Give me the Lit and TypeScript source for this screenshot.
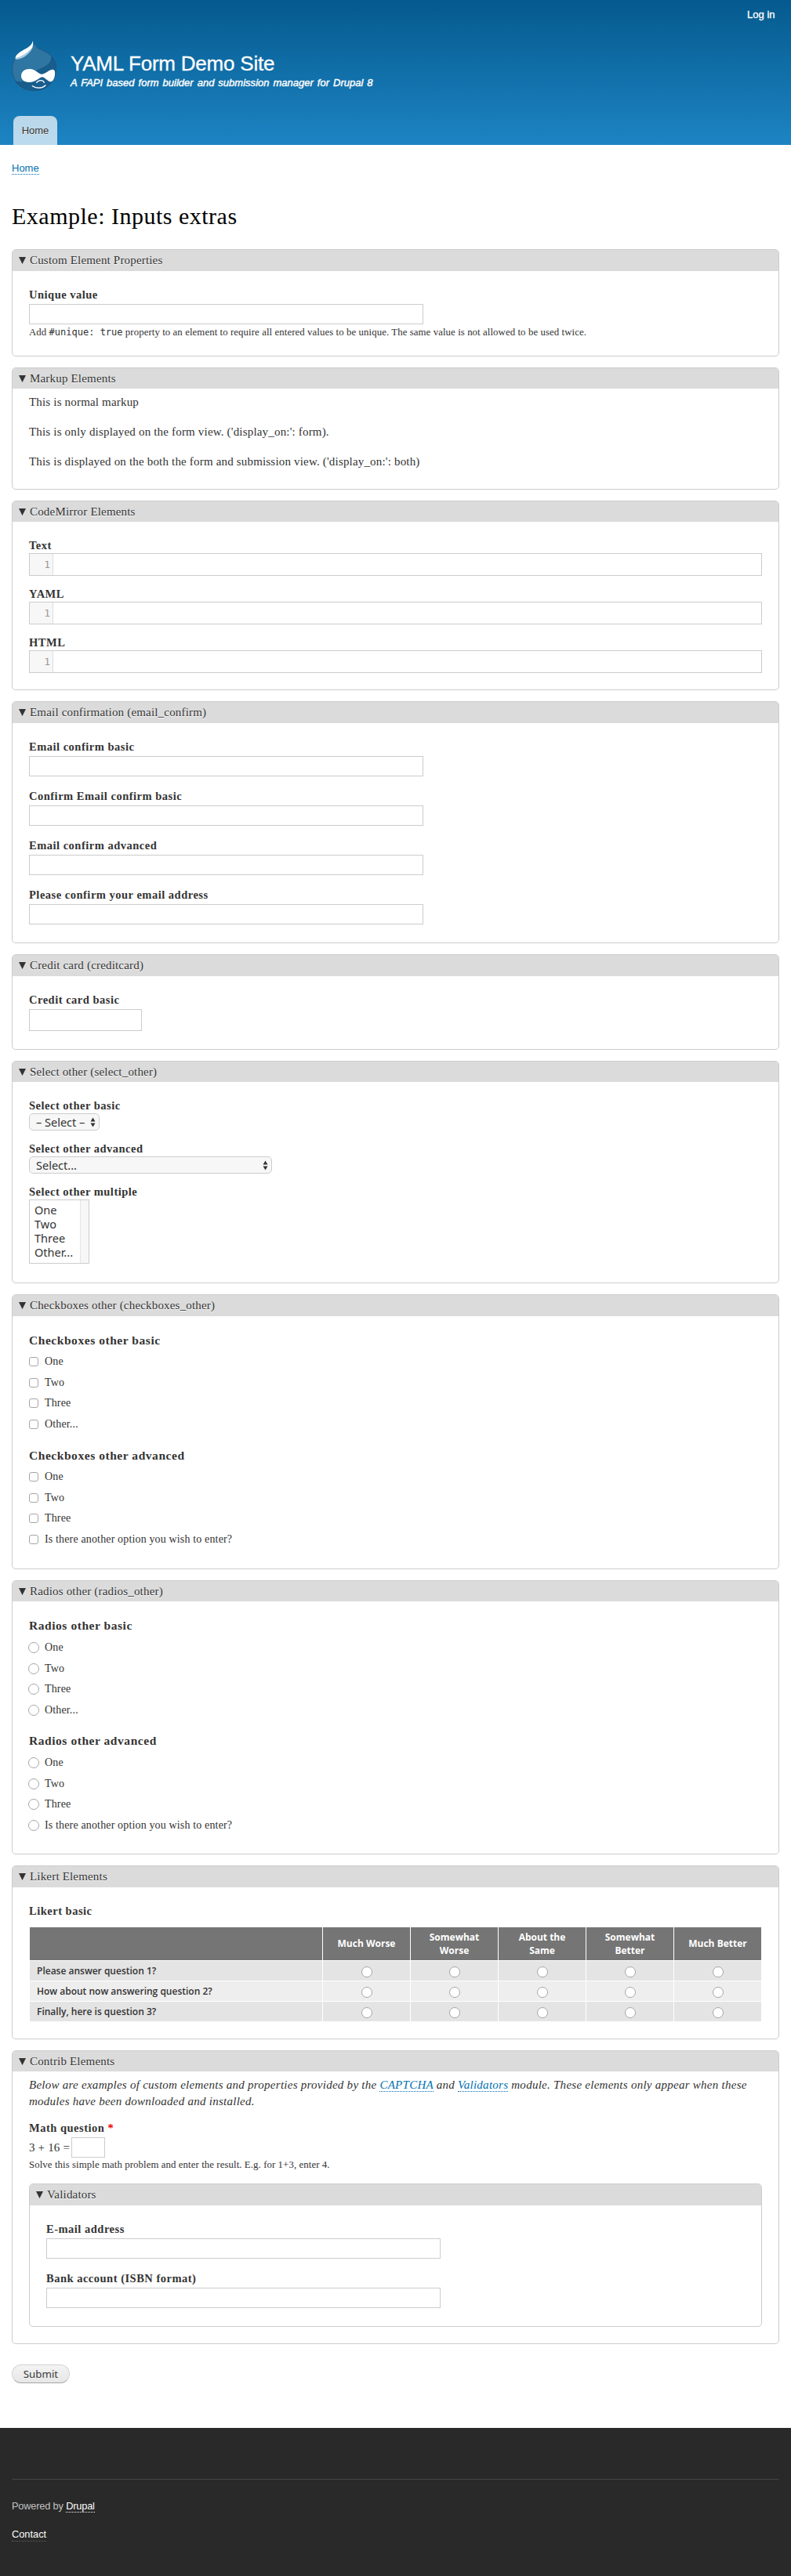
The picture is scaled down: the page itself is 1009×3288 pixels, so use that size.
import { LitElement, html, css, svg, TemplateResult } from "lit";
import { customElement } from "lit/decorators.js";

const dropLogo = html`<svg class="logo" viewBox="45 153 174 196" aria-label="Drupal">
  ${svg`
  <path fill="#2f76a3" d="M125 155C128 178 152 186 174 197C201 211 216 235 216 262C216 312 178 347 131 347C84 347 46 312 46 264C46 236 58 213 82 199C106 185 122 178 125 155Z"/>
  <path fill="#195d8d" d="M195 211C209 225 216 242 216 262C216 312 178 347 131 347C98 347 69 331 56 309C78 312 112 314 132 298C141 289 128 284 133 274C150 256 200 256 195 211Z"/>
  <path fill="none" stroke="#1c5580" stroke-width="2.5" d="M140 181C150 187 163 191 174 197C201 211 215 235 215 262C215 312 178 346 131 346C84 346 47 312 47 264C47 245 52 231 62 219"/>
  <path fill="#a9cbe2" d="M126 175C123 195 92 226 62 226C56 226 58 217 62 211Z"/>
  <path fill="#fff" d="M125 156C129 172 124 182 116 189C98 205 83 216 62 221C58 214 66 205 80 196C104 182 121 177 125 156Z"/>
  <path fill="#fff" d="M114 263C135 263 146 283 160 283C172 283 186 266 202 265C212 266 211 279 210 287C208 302 201 313 192 312C181 309 172 296 162 294C149 296 138 314 111 314C91 313 81 303 81 289C82 273 95 263 114 263Z"/>
  <path fill="none" stroke="#fff" stroke-width="4" stroke-linecap="round" d="M140 315C147 306 164 303 169 315M124 328C137 338 160 339 174 326"/>
  `}
</svg>`;

const arrows = html`<svg class="arrows" viewBox="0 0 7 13"><path fill="#333" d="M3.5 0.5L6.5 5.5H0.5ZM3.5 12.5L0.5 7.5H6.5Z" /></svg>`;

const field = (label: string, size = "") => html`
  <div class="item"><label class="label">${label}</label><input class="text ${size}" type="text" /></div>`;

const editor = (label: string) => html`
  <div class="item code"><div class="label">${label}</div>
    <div class="editor"><span class="gutter">1</span></div></div>`;

const options = (title: string, type: string, last: string) => html`
  <div class="group ${type}"><div class="heading">${title}</div>
    <div class="list">${["One", "Two", "Three", last].map(
      (o) => html`<label class="option"><input type=${type} />${o}</label>`)}</div></div>`;

const panel = (name: string, title: string, body: TemplateResult) => html`
  <section class="panel ${name}">
    <div class="summary"><svg class="tri" viewBox="0 0 9 9"><path fill="#333" d="M0 0H9L4.5 9Z" /></svg>${title}</div>
    <div class="body">${body}</div>
  </section>`;

const scale = ["Much Worse", "Somewhat Worse", "About the Same", "Somewhat Better", "Much Better"];
const questions = ["Please answer question 1?", "How about now answering question 2?", "Finally, here is question 3?"];
const another = "Is there another option you wish to enter?";

@customElement("app-root")
export class AppRoot extends LitElement {
  static styles = css`
    :host { display: block; background: #fff; color: #333; font: 15px/21px "Liberation Serif", serif; letter-spacing: .18px; }
    * { box-sizing: border-box; }
    a { color: #0071b3; text-decoration: none; border-bottom: 1px dotted #0071b3; }
    header { height: 185px; padding: 0 15px; background: linear-gradient(#055a8e, #1d84c3); color: #fff;
      display: flex; flex-direction: column; font-family: "Liberation Sans", sans-serif; letter-spacing: 0; }
    .login { font-size: 13px; line-height: 20px; padding: 9px 5.5px 0 0; text-align: right; -webkit-text-stroke: .3px #fff; }
    .brand { display: flex; height: 66px; margin-top: 22px; gap: 17px; }
    .logo { width: 58px; height: 66px; flex: none; }
    .site { font-size: 26px; line-height: 30px; padding-top: 15px; letter-spacing: -.22px; -webkit-text-stroke: .3px #fff; white-space: nowrap; }
    .slogan { font-size: 13px; line-height: 18px; font-style: italic; word-spacing: 1.3px; letter-spacing: .02px; margin-top: 1px; -webkit-text-stroke: .4px #fff; white-space: nowrap; }
    .tab { width: 56px; height: 37px; margin: auto 0 0 2px; border-radius: 8px 8px 0 0; background: rgba(255,255,255,.7);
      color: #333; font-size: 13px; line-height: 37px; text-align: center; text-shadow: 0 1px 0 #eee; }
    main { padding: 0 15px; display: flex; flex-direction: column; height: 2914px; }
    .crumb { font: 13px/14px "Liberation Sans", sans-serif; letter-spacing: 0; margin-top: 23px; }
    .crumb a { display: inline-block; height: 15px; }
    h1 { margin: 33px 0 0; font-size: 30px; font-weight: 400; line-height: 40px; letter-spacing: .5px; color: #000; height: 62px; }
    .panels { display: flex; flex-direction: column; gap: 14px; }
    .panel { border: 1px solid #ccc; border-radius: 5px; overflow: hidden; }
    .summary { height: 27px; background: #dbdbdb; line-height: 27px; padding-left: 7.5px; display: flex; align-items: center; text-shadow: 0 1px 0 #fff; }
    .tri { width: 9px; height: 9px; margin-right: 5.5px; }
    .even > .summary { height: 26px; line-height: 27px; }
    .body { padding: 20px 21px 0; }
    .p1 { height: 137px; } .p2 { height: 156px; } .p3 { height: 242px; } .p4 { height: 309px; } .p5 { height: 122px; }
    .p6 { height: 284px; } .p7 { height: 351px; } .p8 { height: 350px; } .p9 { height: 222px; } .p10 { height: 375px; } .p11 { height: 183px; margin-top: 15px; }
    .label { display: block; font-size: 14.5px; font-weight: 700; line-height: 20px; letter-spacing: .5px; }
    .item + .item { margin-top: 15px; }
    .code + .code, .pick + .pick { margin-top: 13px; }
    .text { display: block; width: 503px; height: 26px; margin: 2px 0 0; padding: 0; border: 1px solid #ccc; background: #fff; outline: 0; border-radius: 0; }
    .card { width: 144px; height: 28px; }
    .sum { width: 43px; margin: 0 0 0 2px; }
    .desc { font-size: 12.8px; line-height: 18px; letter-spacing: .09px; white-space: nowrap; }
    .p1 .desc { margin-top: 1px; }
    .desc code { font: 12px "DejaVu Sans Mono", monospace; letter-spacing: 0; }
    .p2 .body, .p10 > .body { padding-top: 6.5px; }
    .markup { margin: 0 0 17px; }
    .editor { height: 29px; border: 1px solid #ccc; display: flex; }
    .gutter { width: 30px; background: #f7f7f7; border-right: 1px solid #ddd; text-align: right; padding-right: 3px; color: #999;
      font: 13px/28px "DejaVu Sans Mono", monospace; letter-spacing: 0; }
    .ui { font-family: "Noto Sans", sans-serif; font-size: 14.5px; letter-spacing: 0; color: #333; }
    .select { width: 310px; height: 22px; border: 1px solid #ccc; border-radius: 5px; background: #f7f7f7; display: flex; align-items: center;
      justify-content: space-between; padding: 0 4px 0 8px; line-height: 20px; white-space: nowrap; }
    .short { width: 90px; }
    .arrows { width: 7px; height: 13px; flex: none; }
    .listbox { width: 77px; height: 82px; border: 1px solid #ccc; display: flex; }
    .choices { flex: 1; padding: 3px 0 0 6px; line-height: 18px; }
    .track { width: 11px; background: #f7f7f7; border-left: 1px solid #e4e4e4; }
    .heading { font-size: 15.5px; font-weight: 700; line-height: 22px; letter-spacing: .55px; }
    .list { margin-top: 2.7px; }
    .option { display: flex; align-items: center; height: 26.6px; font-size: 14px; line-height: 26px; letter-spacing: .15px; }
    .group + .group { margin-top: 15.9px; }
    .option input, .cell input { appearance: none; width: 12px; height: 12px; margin: 0 8px 0 0; border: 1px solid #a6a6a6; border-radius: 3px; background: #fff; }
    .radio .list { margin-top: 3.7px; }
    .radio + .radio { margin-top: 14.9px; }
    .radio .option input { width: 14px; height: 14px; margin: 0 7px 0 -1px; border-radius: 50%; }
    .likert { display: grid; grid-template-columns: 373px repeat(5, 111px); grid-template-rows: 42px 25px 25px 25px; gap: 1px; margin: 11px 0 0 1px;
      font-family: "Open Sans", sans-serif; letter-spacing: 0; }
    .th, .cell { display: flex; align-items: center; justify-content: center; }
    .th { background: #757575; color: #fff; font-size: 12px; font-weight: 700; line-height: 17.5px; text-align: center; padding: 0 18px; }
    .cell { background: #e4e4e4; }
    .alt { background: #eee; }
    .q { justify-content: flex-start; padding: 0 0 1px 9px; font-size: 12px; font-weight: 600; }
    .cell input { width: 14px; height: 14px; margin: 2px 0 0; border-radius: 50%; }
    .intro { font-style: italic; margin: 0 -10px 13.5px 0; letter-spacing: .26px; white-space: nowrap; }
    .req { color: #e00; }
    .math { display: flex; align-items: center; height: 26px; margin-top: 2px; }
    .submit { width: 74px; height: 24px; margin-top: 26px; border: 1px solid #d2d2d2; border-bottom-color: #a6a6a6; border-radius: 12px; padding: 0;
      background: linear-gradient(#f3f3f3, #e7e7e7); font: 13.3px/20px "Noto Sans", sans-serif; color: #3a3a3a; }
    footer { height: 189px; background: #292929; padding: 65px 15px 0; font: 12.8px/20px "Liberation Sans", sans-serif; letter-spacing: -.18px; color: #c0c0c0; }
    .rule { border-top: 1px solid #464646; padding-top: 24px; }
    footer a { color: #fcfcfc; border-color: #fcfcfc; display: inline-block; line-height: 15px; }
    .contact { display: block; margin-top: 16px; letter-spacing: 0; }
    .contact a { border-color: #606060; line-height: 17px; }
  `;

  render() {
    return html`
      <header>
        <div class="login">Log in</div>
        <div class="brand">${dropLogo}<div><div class="site">YAML Form Demo Site</div>
          <div class="slogan">A FAPI based form builder and submission manager for Drupal 8</div></div></div>
        <div class="tab">Home</div>
      </header>
      <main>
        <div class="crumb"><a>Home</a></div>
        <h1>Example: Inputs extras</h1>
        <div class="panels">
          ${panel("p1", "Custom Element Properties", html`${field("Unique value")}
            <div class="desc">Add <code>#unique: true</code> property to an element to require all entered values to be unique. The same value is not allowed to be used twice.</div>`)}
          ${panel("p2 even", "Markup Elements", html`
            <p class="markup">This is normal markup</p>
            <p class="markup">This is only displayed on the form view. ('display_on:': form).</p>
            <p class="markup">This is displayed on the both the form and submission view. ('display_on:': both)</p>`)}
          ${panel("p3 even", "CodeMirror Elements", html`${["Text", "YAML", "HTML"].map(editor)}`)}
          ${panel("p4", "Email confirmation (email_confirm)", html`${["Email confirm basic", "Confirm Email confirm basic",
            "Email confirm advanced", "Please confirm your email address"].map((l) => field(l))}`)}
          ${panel("p5", "Credit card (creditcard)", field("Credit card basic", "card"))}
          ${panel("p6 even", "Select other (select_other)", html`
            <div class="pick"><div class="label">Select other basic</div><div class="select short ui">– Select –${arrows}</div></div>
            <div class="pick"><div class="label">Select other advanced</div><div class="select ui">Select...${arrows}</div></div>
            <div class="pick"><div class="label">Select other multiple</div>
              <div class="listbox ui"><div class="choices">${["One", "Two", "Three", "Other..."].map((o) => html`<div>${o}</div>`)}</div><div class="track"></div></div></div>`)}
          ${panel("p7", "Checkboxes other (checkboxes_other)", html`
            ${options("Checkboxes other basic", "checkbox", "Other...")}${options("Checkboxes other advanced", "checkbox", another)}`)}
          ${panel("p8 even", "Radios other (radios_other)", html`
            ${options("Radios other basic", "radio", "Other...")}${options("Radios other advanced", "radio", another)}`)}
          ${panel("p9", "Likert Elements", html`<div class="label">Likert basic</div>
            <div class="likert"><div class="th"></div>${scale.map((s) => html`<div class="th">${s}</div>`)}
              ${questions.map((q, i) => html`<div class="cell q ${i % 2 ? "alt" : ""}">${q}</div>
                ${scale.map(() => html`<div class="cell ${i % 2 ? "alt" : ""}"><input type="radio" /></div>`)}`)}</div>`)}
          ${panel("p10 even", "Contrib Elements", html`
            <p class="intro">Below are examples of custom elements and properties provided by the <a>CAPTCHA</a> and <a>Validators</a> module. These elements only appear when these<br />modules have been downloaded and installed.</p>
            <div class="label">Math question <span class="req">*</span></div>
            <div class="math">3 + 16 =<input class="text sum" type="text" /></div>
            <div class="desc">Solve this simple math problem and enter the result. E.g. for 1+3, enter 4.</div>
            ${panel("p11", "Validators", html`${field("E-mail address")}${field("Bank account (ISBN format)")}`)}`)}
        </div>
        <button class="submit">Submit</button>
      </main>
      <footer><div class="rule">Powered by <a>Drupal</a><span class="contact"><a>Contact</a></span></div></footer>`;
  }
}
